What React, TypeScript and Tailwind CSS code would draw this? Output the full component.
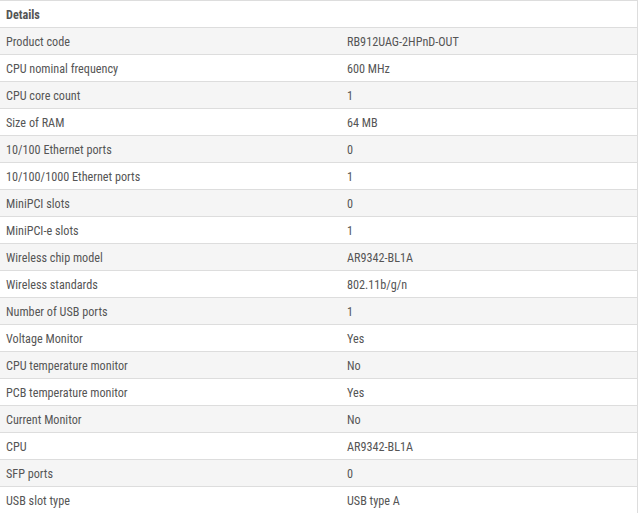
const specs: [string, string][] = [
  ['Product code', 'RB912UAG-2HPnD-OUT'],
  ['CPU nominal frequency', '600 MHz'],
  ['CPU core count', '1'],
  ['Size of RAM', '64 MB'],
  ['10/100 Ethernet ports', '0'],
  ['10/100/1000 Ethernet ports', '1'],
  ['MiniPCI slots', '0'],
  ['MiniPCI-e slots', '1'],
  ['Wireless chip model', 'AR9342-BL1A'],
  ['Wireless standards', '802.11b/g/n'],
  ['Number of USB ports', '1'],
  ['Voltage Monitor', 'Yes'],
  ['CPU temperature monitor', 'No'],
  ['PCB temperature monitor', 'Yes'],
  ['Current Monitor', 'No'],
  ['CPU', 'AR9342-BL1A'],
  ['SFP ports', '0'],
  ['USB slot type', 'USB type A'],
]

export default function App() {
  return (
    <div
      className="w-[638px] bg-white text-[12.2px] text-[#555] border-t border-r border-[#ddd]"
      style={{ fontFamily: '"Roboto Condensed", "Liberation Sans Narrow", "Arial Narrow", Roboto, sans-serif' }}
    >
      <div className="h-[27px] flex items-center px-[6px] pt-[2px] border-b border-[#ddd] font-bold">Details</div>
      {specs.map(([label, value], i) => (
        <div
          key={label}
          className={`h-[27px] flex items-center pt-[2px] border-b border-[#ddd] ${i % 2 === 0 ? 'bg-[#f5f5f5]' : 'bg-white'}`}
        >
          <div className="w-[347px] pl-[6px]">{label}</div>
          <div className="flex-1">{value}</div>
        </div>
      ))}
    </div>
  )
}
